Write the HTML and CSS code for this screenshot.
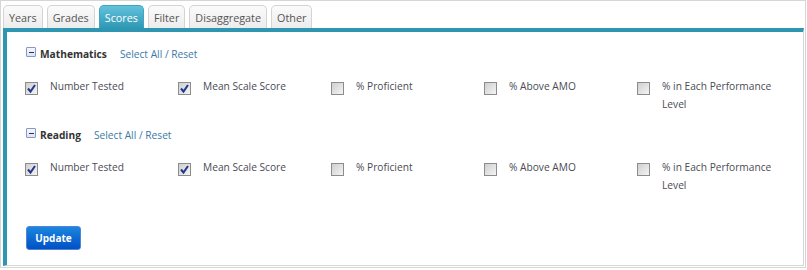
FILE: index.html
```html
<!DOCTYPE html>
<html lang="en">
<head>
  <meta charset="UTF-8">
  <title>Scores</title>
  <link rel="stylesheet" href="styles.css">
</head>
<body>
  <div class="frame">
    <ul class="tabs">
      <li class="tab">Years</li>
      <li class="tab">Grades</li>
      <li class="tab active">Scores</li>
      <li class="tab">Filter</li>
      <li class="tab">Disaggregate</li>
      <li class="tab">Other</li>
    </ul>

    <div class="panel">
      <div class="group">
        <div class="group-head">
          <span class="toggle"></span>
          <span class="group-name">Mathematics</span>
          <a class="select-link">Select All / Reset</a>
        </div>
        <div class="options">
          <label class="option">
            <span class="box"><svg viewBox="0 0 11 11"><polyline points="2,5.5 4.5,8.5 9,2"/></svg></span>
            <span class="option-text">Number Tested</span>
          </label>
          <label class="option">
            <span class="box"><svg viewBox="0 0 11 11"><polyline points="2,5.5 4.5,8.5 9,2"/></svg></span>
            <span class="option-text">Mean Scale Score</span>
          </label>
          <label class="option">
            <span class="box"></span>
            <span class="option-text">% Proficient</span>
          </label>
          <label class="option">
            <span class="box"></span>
            <span class="option-text">% Above AMO</span>
          </label>
          <label class="option">
            <span class="box"></span>
            <span class="option-text">% in Each Performance Level</span>
          </label>
        </div>
      </div>

      <div class="group">
        <div class="group-head">
          <span class="toggle"></span>
          <span class="group-name">Reading</span>
          <a class="select-link">Select All / Reset</a>
        </div>
        <div class="options">
          <label class="option">
            <span class="box"><svg viewBox="0 0 11 11"><polyline points="2,5.5 4.5,8.5 9,2"/></svg></span>
            <span class="option-text">Number Tested</span>
          </label>
          <label class="option">
            <span class="box"><svg viewBox="0 0 11 11"><polyline points="2,5.5 4.5,8.5 9,2"/></svg></span>
            <span class="option-text">Mean Scale Score</span>
          </label>
          <label class="option">
            <span class="box"></span>
            <span class="option-text">% Proficient</span>
          </label>
          <label class="option">
            <span class="box"></span>
            <span class="option-text">% Above AMO</span>
          </label>
          <label class="option">
            <span class="box"></span>
            <span class="option-text">% in Each Performance Level</span>
          </label>
        </div>
      </div>

      <button class="update-btn">Update</button>
    </div>
  </div>
</body>
</html>
```

FILE: styles.css
```css
body {
  margin: 0;
  font-family: 'Open Sans', 'Liberation Sans', sans-serif;
  background-color: #fff;
  color: #333;
}

.frame {
  box-sizing: border-box;
  width: 806px;
  height: 268px;
  border: 1px solid #d6d6d6;
  padding: 4px 1px 1px 2px;
  display: flex;
  flex-direction: column;
}

/* tabs */

.tabs {
  list-style: none;
  margin: 0;
  padding: 0;
  display: flex;
  gap: 4px;
  height: 23px;
}

.tab {
  box-sizing: border-box;
  height: 23px;
  padding: 3px 5px 0;
  line-height: 18px;
  font-size: 10.8px;
  color: #555;
  border: 1px solid #d4d4d4;
  border-bottom: none;
  border-radius: 5px 5px 0 0;
  background: linear-gradient(#fbfbfb, #ececec);
  cursor: pointer;
}

.tab.active {
  color: #fff;
  border-color: #3da6c2;
  background: linear-gradient(#63c2dc, #2f98b4);
}

/* panel */

.panel {
  flex: 1;
  border-top: 4px solid #2f96b2;
  border-left: 4px solid #2f96b2;
  border-right: 1px solid #d6d6d6;
  border-bottom: 1px solid #d6d6d6;
  padding: 13px 0 0 18px;
}

.group {
  margin-bottom: 13px;
}

.group-head {
  display: flex;
  align-items: flex-start;
  height: 18px;
  line-height: 18px;
  margin-bottom: 14px;
  font-size: 10.2px;
}

.toggle {
  box-sizing: border-box;
  width: 10px;
  height: 10px;
  margin: 2px 4px 0 1px;
  border: 1px solid #8797c6;
  border-radius: 1px;
  background: linear-gradient(#f7f8fd, #dde3f3);
  display: flex;
  align-items: center;
  justify-content: center;
}

.toggle::before {
  content: '';
  width: 5px;
  height: 1px;
  background-color: #2c3350;
}

.group-name {
  font-weight: bold;
  color: #333;
  margin-right: 13px;
}

.select-link {
  color: #3b7aa6;
  cursor: pointer;
}

.options {
  display: grid;
  grid-template-columns: repeat(5, 153px);
}

.option {
  display: flex;
  align-items: flex-start;
  font-size: 10.2px;
  line-height: 18px;
  color: #4b4b55;
}

.box {
  box-sizing: border-box;
  flex: none;
  width: 13px;
  height: 13px;
  margin: 5px 12px 0 0;
  border: 1px solid #8c8c8c;
  background: linear-gradient(135deg, #cfcfcf, #f4f4f4);
  display: flex;
}

.box svg {
  width: 11px;
  height: 11px;
}

.box polyline {
  fill: none;
  stroke: #22378c;
  stroke-width: 2;
}

.option-text {
  width: 120px;
}

.update-btn {
  margin: 19px 0 0 1px;
  width: 55px;
  height: 24px;
  padding: 0;
  font-family: 'Open Sans', 'Liberation Sans', sans-serif;
  font-size: 10px;
  font-weight: bold;
  color: #fff;
  border: 1px solid #4f86d4;
  border-radius: 3px;
  background: linear-gradient(#1b86de, #0050c6);
  cursor: pointer;
}
```
